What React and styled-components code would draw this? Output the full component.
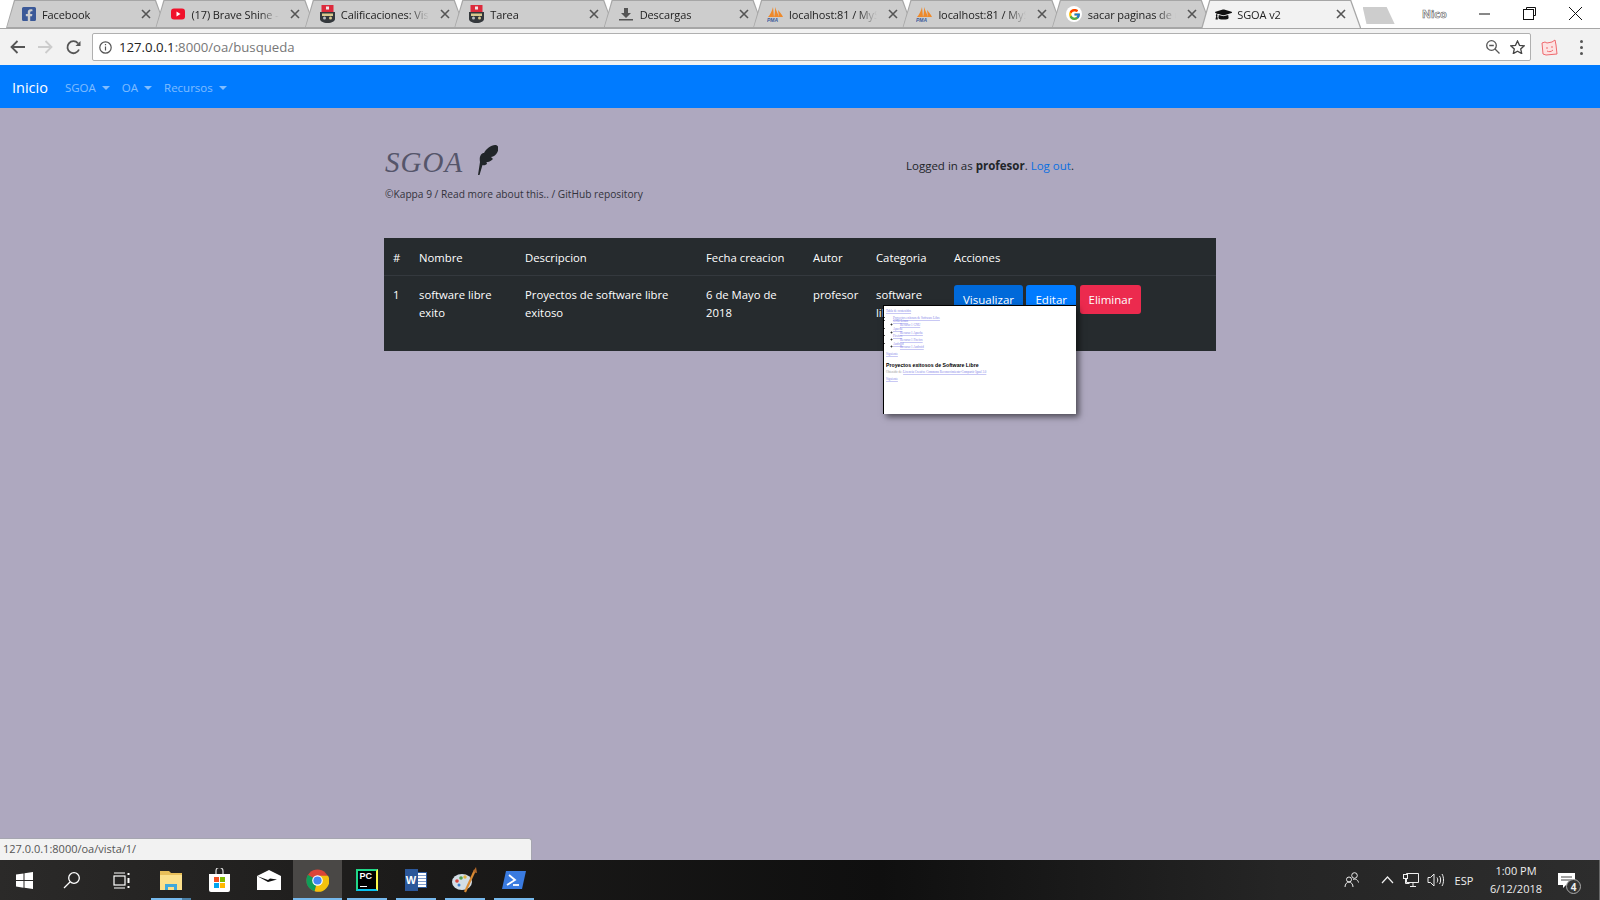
import React from 'react';
import styled, { createGlobalStyle } from 'styled-components';
import { FaFacebookSquare, FaGraduationCap } from 'react-icons/fa';
import { FcGoogle } from 'react-icons/fc';

const GlobalStyle = createGlobalStyle`
html, body {
  margin:0;
  padding:0;
  height:100%;
  overflow:hidden;
}
body {
  font-family:"Open Sans","Noto Sans",sans-serif;
}
`

const GoogleBadge = styled.div`
display:flex;
align-items:center;
justify-content:center;
width:16px;
height:16px;
border-radius:50%;
background-color:#fff;
`
const PyCharmIcon = styled.div`
position:relative;
width:22px;
height:22px;
box-sizing:border-box;
border:2px solid;
border-color:#21d789 #fcf84a #07c3f2 #21d789;
background-color:#000;
color:#fff;
font-family:"Liberation Sans",sans-serif;
font-size:9px;
line-height:11px;
padding-left:2px;

& i{
  position:absolute;
  left:2px;
  bottom:2px;
  width:7px;
  height:1px;
  background-color:#fff;
}
`
const WordIcon = styled.div`
position:relative;
width:22px;
height:22px;
color:#fff;
font-family:"Liberation Sans",sans-serif;
font-size:11px;
line-height:22px;

& span{
  position:absolute;
  right:0;
  top:3px;
  width:11px;
  height:16px;
  box-sizing:border-box;
  border:1px solid #2b579a;
  background:repeating-linear-gradient(to bottom, #fff 0 2px, #7f9ccb 2px 3px);
}
& b{
  position:absolute;
  left:0;
  top:0;
  width:13px;
  height:22px;
  text-align:center;
  background-color:#2b579a;
}
`

const EspolIcon = () => <svg width="15" height="18" viewBox="0 0 15 18">
  <rect x="1.500" y="0" width="12" height="7" fill="#dd2a3c" />
  <rect x="6" y="1.500" width="3" height="3" fill="#f2e6e6" />
  <path d="M0 7h15v7c0 2-3 4-7.500 4S0 16 0 14z" fill="#34383c" />
  <rect x="2" y="8.500" width="11" height="2.500" fill="#d9c98f" />
  <circle cx="4.500" cy="13" r="1.500" fill="#b9bdc2" />
  <circle cx="10.500" cy="13" r="1.500" fill="#d9c98f" />
</svg>

const YoutubeIcon = () => <svg width="14" height="12" viewBox="0 0 14 12">
  <rect width="14" height="11" y="0.500" rx="3" fill="#f0122b" />
  <path d="M5.500 3.500l4 2.500-4 2.500z" fill="#fff" />
</svg>

const DownloadIcon = () => <svg width="14" height="14" viewBox="0 0 14 14">
  <path d="M5 1h4v5h3L7 11 2 6h3z" fill="#555" />
  <rect y="12" width="14" height="1.500" fill="#555" />
</svg>

const PmaIcon = () => <svg width="17" height="16" viewBox="0 0 17 16">
  <path d="M1 11C3 9 5 5 6 1l1 10zM7 11c1-3 1-7 1-10 1 3 3 7 4 10zM11 4c2 2 4 5 5 7h-4z" fill="#ee8a2c" />
  <text x="0" y="16" fontSize="5" fontStyle="italic" fontWeight="700" fontFamily="Liberation Sans" fill="#3b5a9a">PMA</text>
</svg>

const FeatherLogo = () => <svg width="22" height="30" viewBox="0 0 22 30">
  <path d="M2 30L4 17C3 12 5 8 8 8 10 4 15 0 19 0 23 0 23 4 21.500 7 20 10 18 11.500 15 12L17 14C14.500 16.500 12.500 17 10.500 17L11 19C9 20.500 7.500 20.500 6.500 20L3.500 30z" fill="#212529" />
</svg>

const GoogleIcon = () => <GoogleBadge><FcGoogle size={13} /></GoogleBadge>

const tabs = [
  { title: 'Facebook', icon: <FaFacebookSquare size={16} color="#3b5998" /> },
  { title: '(17) Brave Shine - YouTube', icon: <YoutubeIcon /> },
  { title: 'Calificaciones: Vista', icon: <EspolIcon /> },
  { title: 'Tarea', icon: <EspolIcon /> },
  { title: 'Descargas', icon: <DownloadIcon /> },
  { title: 'localhost:81 / MySQL', icon: <PmaIcon /> },
  { title: 'localhost:81 / MySQL', icon: <PmaIcon /> },
  { title: 'sacar paginas de un pdf', icon: <GoogleIcon /> },
  { title: 'SGOA v2', icon: <FaGraduationCap size={17} color="#111" />, active: true },
];

const CloseX = () => <svg width="10" height="10" viewBox="0 0 10 10">
  <path d="M1 1l8 8M9 1L1 9" stroke="#555" strokeWidth="1.600" />
</svg>

const ChromeLogo = () => <svg width="23" height="23" viewBox="0 0 24 24">
  <circle cx="12" cy="12" r="11.500" fill="#db4437" />
  <path d="M12 12L2 6A11.500 11.500 0 0 0 9 23.100z" fill="#0f9d58" />
  <path d="M12 7h11A11.500 11.500 0 0 1 9 23.100l3-11z" fill="#f4c20d" />
  <circle cx="12" cy="12" r="5.500" fill="#fff" />
  <circle cx="12" cy="12" r="4.300" fill="#4285f4" />
</svg>

const taskItems = [
  { key: 'start', width: 48, icon: <svg width="17" height="17" viewBox="0 0 17 17"><path d="M0 2.500L7.500 1.400v6.700H0zM8.500 1.300L17 0v8.100H8.500zM0 9h7.500v6.700L0 14.600zM8.500 9H17v8l-8.500-1.200z" fill="#fff" /></svg> },
  { key: 'search', width: 48, icon: <svg width="18" height="18" viewBox="0 0 18 18" fill="none" stroke="#fff" strokeWidth="1.300"><circle cx="11" cy="7" r="5.300" /><path d="M7 11l-6 6" /></svg> },
  { key: 'view', width: 50, icon: <svg width="17" height="17" viewBox="0 0 17 17" fill="none" stroke="#fff" strokeWidth="1.200"><path d="M1 1h11M1 16h11" /><rect x="1" y="4" width="11" height="9" /><path d="M15.500 1v2M15.500 6v5M15.500 14v2" strokeWidth="2" /></svg> },
  { key: 'files', width: 49, running: 'split', icon: <svg width="22" height="19" viewBox="0 0 22 19"><path d="M0 0h9l2 2h11v17H0z" fill="#e8bf5a" /><rect y="4" width="22" height="15" fill="#fbe08c" /><path d="M5 19v-6h12v6h-3v-3H8v3z" fill="#3fa8dc" /></svg> },
  { key: 'store', width: 49, icon: <svg width="23" height="24" viewBox="0 0 23 24"><path d="M8 7V3a3.500 3.500 0 0 1 7 0v4" fill="none" stroke="#ddd" strokeWidth="1.200" /><path d="M1 6h21v16a2 2 0 0 1-2 2H3a2 2 0 0 1-2-2z" fill="#fff" /><rect x="6" y="9" width="5" height="5" fill="#f25022" /><rect x="12" y="9" width="5" height="5" fill="#7fba00" /><rect x="6" y="15" width="5" height="5" fill="#00a4ef" /><rect x="12" y="15" width="5" height="5" fill="#ffb900" /></svg> },
  { key: 'mail', width: 49, icon: <svg width="24" height="20" viewBox="0 0 24 20"><path d="M0 6L12 0l12 6v14H0z" fill="#fff" /><path d="M0 6l11 6 9-2.500-7-1-2 1.500z" fill="#111" /></svg> },
  { key: 'chrome', width: 49, running: 'active', icon: <ChromeLogo /> },
  { key: 'pycharm', width: 49, running: 'on', icon: <PyCharmIcon><b>PC</b><i /></PyCharmIcon> },
  { key: 'word', width: 49, running: 'on', icon: <WordIcon><span /><b>W</b></WordIcon> },
  { key: 'paint', width: 49, running: 'on', icon: <svg width="25" height="26" viewBox="0 0 25 26"><ellipse cx="10" cy="15" rx="10" ry="8" fill="#d3dde6" /><circle cx="5" cy="14" r="1.800" fill="#d8453b" /><circle cx="9" cy="11" r="1.800" fill="#4fa04a" /><circle cx="13" cy="10" r="1.700" fill="#e3b23c" /><circle cx="7" cy="18" r="1.500" fill="#3f7fcf" /><path d="M13 25L23 3" stroke="#d98a33" strokeWidth="2.200" /><path d="M21 5l3-5 1 6z" fill="#b56a2a" /></svg> },
  { key: 'shell', width: 49, running: 'on', icon: <svg width="24" height="18" viewBox="0 0 24 18"><path d="M4 0h20l-4 18H0z" fill="#3a7be0" /><path d="M7 4l6 5-8 5" fill="none" stroke="#fff" strokeWidth="1.800" /><path d="M11 14h6" stroke="#fff" strokeWidth="1.800" /></svg> },
];

const App = () => {
  return <Screen>
    <GlobalStyle />
    <TabStrip>
      <TabRow>
        {tabs.map((tab, index) => {
          return <Tab key={index} $active={tab.active}>
            <TabIcon>{tab.icon}</TabIcon>
            <TabTitle>{tab.title}</TabTitle>
            <TabClose><CloseX /></TabClose>
          </Tab>
        })}
        <NewTab />
      </TabRow>
      <ProfileName>Nico</ProfileName>
      <WindowControls>
        <svg width="13" height="13" viewBox="0 0 13 13"><path d="M1 7h11" stroke="#111" /></svg>
        <svg width="13" height="13" viewBox="0 0 13 13" fill="none" stroke="#111"><path d="M3.500 2.500v-2h9v8h-2" /><rect x="0.500" y="2.500" width="10" height="10" /></svg>
        <svg width="15" height="15" viewBox="0 0 15 15"><path d="M1 1l13 13M14 1L1 14" stroke="#111" /></svg>
      </WindowControls>
    </TabStrip>

    <Toolbar>
      <NavIcons>
        <svg width="15" height="14" viewBox="0 0 15 14" fill="none" stroke="#555" strokeWidth="1.800"><path d="M15 7H2M7.500 1L1.500 7l6 6" /></svg>
        <svg width="15" height="14" viewBox="0 0 15 14" fill="none" stroke="#ccc" strokeWidth="1.800"><path d="M0 7h13M7.500 1l6 6-6 6" /></svg>
        <svg width="15" height="15" viewBox="0 0 15 15" fill="none" stroke="#555" strokeWidth="1.800"><path d="M13 9.500A6 6 0 1 1 12 3.300" /><path d="M14.500 1v5h-5z" fill="#555" stroke="none" /></svg>
      </NavIcons>
      <AddressBar>
        <svg width="13" height="13" viewBox="0 0 13 13" fill="none" stroke="#555" strokeWidth="1.200"><circle cx="6.500" cy="6.500" r="5.700" /><path d="M6.500 5.500v4M6.500 3v1.300" /></svg>
        <UrlText>127.0.0.1<UrlRest>:8000/oa/busqueda</UrlRest></UrlText>
        <AddressActions>
          <svg width="14" height="14" viewBox="0 0 14 14" fill="none" stroke="#555" strokeWidth="1.300"><circle cx="5.500" cy="5.500" r="4.800" /><path d="M9 9l4.500 4.500M3.200 5.500h4.600" /></svg>
          <svg width="15" height="14" viewBox="0 0 15 14" fill="none" stroke="#444" strokeWidth="1.300"><path d="M7.500 1l2 4.300 4.700.5-3.500 3.200 1 4.600-4.200-2.400-4.200 2.400 1-4.600L.800 5.800l4.700-.5z" /></svg>
        </AddressActions>
      </AddressBar>
      <svg width="17" height="17" viewBox="0 0 17 17" fill="none" stroke="#ef6a6f" strokeWidth="1"><path d="M1 4l3-1 2 1 5-1 3-2 1 5 1 9-11 1-3-1z" fill="#fde3e3" /><path d="M5 9h2M10 8h2M6 12c2 1 4 1 6-1" /></svg>
      <MenuDots><i /><i /><i /></MenuDots>
    </Toolbar>

    <Navbar>
      <Brand>Inicio</Brand>
      <NavLink>SGOA</NavLink>
      <NavLink>OA</NavLink>
      <NavLink>Recursos</NavLink>
    </Navbar>

    <Page>
      <Masthead>
        <div>
          <LogoRow>
            <LogoText>SGOA</LogoText>
            <FeatherLogo />
          </LogoRow>
          <Credits>©Kappa 9 / Read more about this.. / GitHub repository</Credits>
        </div>
        <Session>Logged in as <b>profesor</b>. <a>Log out</a>.</Session>
      </Masthead>

      <TableWrap>
        <ResultTable>
          <thead>
            <tr>
              <HeadCell $width={26}>#</HeadCell>
              <HeadCell $width={106}>Nombre</HeadCell>
              <HeadCell $width={181}>Descripcion</HeadCell>
              <HeadCell $width={107}>Fecha creacion</HeadCell>
              <HeadCell $width={63}>Autor</HeadCell>
              <HeadCell $width={78}>Categoria</HeadCell>
              <HeadCell>Acciones</HeadCell>
            </tr>
          </thead>
          <tbody>
            <tr>
              <BodyCell>1</BodyCell>
              <BodyCell>software libre exito</BodyCell>
              <BodyCell>Proyectos de software libre exitoso</BodyCell>
              <BodyCell>6 de Mayo de 2018</BodyCell>
              <BodyCell>profesor</BodyCell>
              <BodyCell>software libre</BodyCell>
              <BodyCell>
                <Actions>
                  <ActionButton $bg="#0069d9">Visualizar</ActionButton>
                  <ActionButton $bg="#007bff">Editar</ActionButton>
                  <ActionButton $bg="#ec2a4e">Eliminar</ActionButton>
                </Actions>
              </BodyCell>
            </tr>
          </tbody>
        </ResultTable>
        <Preview>
          <MiniLink>Tabla de contenidos</MiniLink>
          <MiniList>
            <li><MiniLink>Proyectos exitosos de Software Libre</MiniLink></li>
            <li><MiniLink>GNU/Linux</MiniLink><ul><li><MiniLink>Recurso 1 GNU</MiniLink></li></ul></li>
            <li><MiniLink>Apache</MiniLink><ul><li><MiniLink>Recurso 1 Apache</MiniLink></li></ul></li>
            <li><MiniLink>Firefox</MiniLink><ul><li><MiniLink>Recurso 1 Firefox</MiniLink></li></ul></li>
            <li><MiniLink>Android</MiniLink><ul><li><MiniLink>Recurso 1 Android</MiniLink></li></ul></li>
          </MiniList>
          <MiniPara><MiniLink>Siguiente</MiniLink></MiniPara>
          <MiniTitle>Proyectos exitosos de Software Libre</MiniTitle>
          <MiniPara>Obtenido de: <MiniLink>Licencia Creative Commons Reconocimiento-Compartir Igual 3.0</MiniLink></MiniPara>
          <MiniPara $gap={4}><MiniLink>Siguiente</MiniLink></MiniPara>
        </Preview>
      </TableWrap>

      <StatusBubble>127.0.0.1:8000/oa/vista/1/</StatusBubble>
    </Page>

    <Taskbar>
      {taskItems.map((item) => {
        return <TaskCell key={item.key} $width={item.width} $running={item.running}>{item.icon}</TaskCell>
      })}
      <Tray>
        <TrayIcon $width={36} $after={5}>
          <svg width="16" height="16" viewBox="0 0 16 16" fill="none" stroke="#eee" strokeWidth="1"><circle cx="10.500" cy="3.500" r="2.800" /><circle cx="5" cy="7.500" r="2.500" /><path d="M1 15c0-3 2-5 4-5s4 2 4 5M9 7.500c2-1 5 0 5.500 3" /></svg>
        </TrayIcon>
        <TrayIcon $width={24}>
          <svg width="13" height="8" viewBox="0 0 13 8" fill="none" stroke="#eee" strokeWidth="1.200"><path d="M1 7l5.500-6L12 7" /></svg>
        </TrayIcon>
        <TrayIcon $width={24}>
          <svg width="16" height="14" viewBox="0 0 16 14" fill="none" stroke="#eee"><path d="M3.500 0.500h12v9h-12zM7 13.500h6M10 9.500v4" /><rect x="0.500" y="1.500" width="4" height="4" fill="#2c2c2c" /><path d="M2.500 5.500v5h4" /></svg>
        </TrayIcon>
        <TrayIcon $width={24}>
          <svg width="17" height="14" viewBox="0 0 17 14" fill="none" stroke="#eee"><path d="M1 4.500h2.500L7 1v12L3.500 9.500H1zM10 4.500c1 1.500 1 3.500 0 5M12.500 3c1.500 2 1.500 6 0 8M15 1c2 3 2 9 0 12" /></svg>
        </TrayIcon>
        <TrayText $width={34}>ESP</TrayText>
        <Clock>
          <span>1:00 PM</span>
          <span>6/12/2018</span>
        </Clock>
        <Notification>
          <svg width="17" height="15" viewBox="0 0 17 15"><path d="M0 0h17v12H8l-3 3v-3H0z" fill="#fff" /><path d="M3 4h11M3 7h11" stroke="#444" /></svg>
          <NotificationCount>4</NotificationCount>
        </Notification>
      </Tray>
    </Taskbar>
  </Screen>;
};

const Screen = styled.div`
position:relative;
display:flex;
flex-flow:column nowrap;
width:1600px;
height:900px;
background-color:#aea8bf;
overflow:hidden;
`

const TabStrip = styled.div`
display:flex;
flex-flow:row nowrap;
align-items:flex-start;
height:28px;
padding-left:6px;
background-color:#fff;
flex:none;
`
const TabRow = styled.div`
display:flex;
flex-flow:row nowrap;
width:1395px;
flex:none;
`
const TAB_SHAPE = 'polygon(0 100%, 8px 0, calc(100% - 10px) 0, 100% 100%)';
const Tab = styled.div`
position:relative;
z-index:${(p) => (p.$active ? 2 : 1)};
display:flex;
flex-flow:row nowrap;
align-items:center;
width:160px;
height:28px;
margin-right:-10.6px;
padding:0 14px;
box-sizing:border-box;
background-color:#a6a6a6;
clip-path:${TAB_SHAPE};
flex:none;

&::before{
  content:"";
  position:absolute;
  inset:1px 1px ${(p) => (p.$active ? '-1px' : '1px')} 1px;
  background-color:${(p) => (p.$active ? '#f2f2f2' : '#cdcdcd')};
  clip-path:${TAB_SHAPE};
}
`
const TabIcon = styled.div`
position:relative;
display:flex;
align-items:center;
justify-content:center;
width:17px;
height:18px;
flex:none;
margin-right:5px;
`
const TabTitle = styled.div`
position:relative;
flex:1;
overflow:hidden;
white-space:nowrap;
font-family:"Open Sans",sans-serif;
font-size:11px;
letter-spacing:-0.1px;
color:#222;
-webkit-mask-image:linear-gradient(to right, #000 78%, transparent 100%);
mask-image:linear-gradient(to right, #000 78%, transparent 100%);
`
const TabClose = styled.div`
position:relative;
display:flex;
flex:none;
margin-left:11px;
margin-right:1px;
`
const NewTab = styled.div`
flex:none;
width:32px;
height:17px;
margin:7px 0 0 12px;
background-color:#cdcdcd;
clip-path:polygon(0 0, 75% 0, 100% 100%, 12% 100%);
`
const ProfileName = styled.div`
margin:6px 0 0 0;
padding-left:21px;
width:37px;
flex:none;
font-family:"Open Sans",sans-serif;
font-size:11px;
font-weight:700;
color:#fff;
-webkit-text-stroke:0.6px #666;
`
const WindowControls = styled.div`
display:flex;
flex-flow:row nowrap;
align-items:center;
gap:32px;
margin-top:6px;
margin-left:19px;
flex:none;
`

const Toolbar = styled.div`
display:flex;
flex-flow:row nowrap;
align-items:center;
height:37px;
flex:none;
box-sizing:border-box;
border-top:1px solid #a6a6a6;
background-color:#f2f2f2;
padding-right:11px;
`
const NavIcons = styled.div`
display:flex;
flex-flow:row nowrap;
align-items:center;
gap:13px;
width:92px;
padding-left:10px;
box-sizing:border-box;
flex:none;
`
const AddressBar = styled.div`
display:flex;
flex-flow:row nowrap;
align-items:center;
gap:7px;
width:1439px;
height:28px;
box-sizing:border-box;
padding:0 5px 0 6px;
background-color:#fff;
border:1px solid #b0b0b0;
border-radius:2px;
flex:none;
margin-right:10px;
`
const UrlText = styled.div`
flex:1;
font-family:"Open Sans",sans-serif;
font-size:13.2px;
color:#222;
`
const UrlRest = styled.span`
color:#777;
`
const AddressActions = styled.div`
display:flex;
flex-flow:row nowrap;
align-items:center;
gap:10px;
`
const MenuDots = styled.div`
display:flex;
flex-flow:column nowrap;
gap:3px;
margin-left:22px;

& i{
  display:block;
  width:3px;
  height:3px;
  border-radius:50%;
  background-color:#555;
}
`

const Navbar = styled.div`
display:flex;
flex-flow:row nowrap;
align-items:center;
height:43px;
flex:none;
padding:2px 0 0 12px;
box-sizing:border-box;
background-color:#007bff;
`
const Brand = styled.div`
font-family:"Open Sans",sans-serif;
font-size:14.5px;
color:#fff;
margin-right:17px;
`
const NavLink = styled.div`
display:flex;
flex-flow:row nowrap;
align-items:center;
font-family:"Open Sans",sans-serif;
font-size:11.5px;
color:rgba(255,255,255,0.5);
margin-right:12px;

&::after{
  content:"";
  margin-left:6px;
  border-top:4px solid rgba(255,255,255,0.5);
  border-left:4px solid transparent;
  border-right:4px solid transparent;
}
`

const Page = styled.div`
position:relative;
flex:1;
padding:0 384px;
`
const Masthead = styled.div`
display:flex;
flex-flow:row nowrap;
align-items:flex-start;
height:130px;
padding-left:1px;
padding-top:34px;
box-sizing:border-box;
`
const LogoRow = styled.div`
display:flex;
flex-flow:row nowrap;
align-items:center;
gap:13px;
height:36px;
margin-bottom:9px;
`
const LogoText = styled.div`
font-family:"Liberation Serif",serif;
font-style:italic;
font-size:29px;
line-height:36px;
color:#55556a;
letter-spacing:1px;
margin-top:4px;
`
const Credits = styled.div`
font-family:"Open Sans",sans-serif;
font-size:10.2px;
color:#33333c;
width:260px;
white-space:nowrap;
`
const Session = styled.div`
margin-left:261px;
margin-top:16px;
font-family:"Open Sans",sans-serif;
font-size:11.5px;
color:#212529;
white-space:nowrap;

& a{
  color:#0a6fe0;
}
`

const TableWrap = styled.div`
position:relative;
width:832px;
`
const ResultTable = styled.table`
width:832px;
table-layout:fixed;
border-collapse:collapse;
background-color:#262b2e;
font-family:"Open Sans",sans-serif;
font-size:11.3px;
line-height:18px;
color:#fff;
`
const HeadCell = styled.th`
width:${(p) => (p.$width ? `${p.$width}px` : 'auto')};
height:37px;
padding:3px 9px 0;
box-sizing:border-box;
text-align:left;
font-weight:400;
border-bottom:1px solid #34393e;
`
const BodyCell = styled.td`
height:76px;
padding:10px 9px 0;
box-sizing:border-box;
vertical-align:top;
`
const Actions = styled.div`
display:flex;
flex-flow:row nowrap;
gap:3.5px;
margin-top:-1px;
`
const ActionButton = styled.div`
padding:0 9px;
height:29px;
line-height:29px;
border-radius:3px;
color:#fff;
font-size:11.5px;
white-space:nowrap;
background-color:${(p) => p.$bg};
`

const Preview = styled.div`
position:absolute;
left:499px;
top:67px;
width:193px;
height:109px;
box-sizing:border-box;
padding:4px 2px;
background-color:#fff;
border-top:1px solid #000;
border-left:1px solid #000;
box-shadow:3px 3px 6px rgba(0,0,0,0.55);
font-family:"Liberation Serif",serif;
font-size:3.15px;
line-height:3.7px;
color:#999;
overflow:hidden;
`
const MiniLink = styled.span`
color:#7f7fe8;
text-decoration:underline;
text-decoration-color:#c8c8f4;
`
const MiniList = styled.ul`
margin:3px 0 0 0;
padding-left:7px;
color:#555;
list-style:square;

& ul{
  margin:0;
  padding-left:7px;
  color:#000;
}
`
const MiniPara = styled.div`
margin-top:${(p) => (p.$gap ? p.$gap : 3)}px;
`
const MiniTitle = styled.div`
margin-top:5px;
font-family:"Liberation Sans",sans-serif;
font-size:5.2px;
line-height:6px;
font-weight:700;
color:#000;
`

const StatusBubble = styled.div`
position:absolute;
left:0;
bottom:0;
width:528px;
height:21px;
padding-left:3px;
box-sizing:content-box;
background-color:#f2f2f2;
border-top:1px solid #a6a6b0;
border-right:1px solid #a6a6b0;
border-top-right-radius:3px;
font-family:"Open Sans",sans-serif;
font-size:11px;
line-height:20px;
color:#555;
`

const Taskbar = styled.div`
display:flex;
flex-flow:row nowrap;
height:40px;
flex:none;
background:linear-gradient(to right, #2b2a29 0%, #1c1b1a 25%, #0f0f0f 55%, #252525 80%, #2d2d2d 100%);
`
const TaskCell = styled.div`
position:relative;
display:flex;
align-items:center;
justify-content:center;
width:${(p) => p.$width}px;
height:40px;
flex:none;
background-color:${(p) => (p.$running === 'active' ? '#4a4846' : 'transparent')};

&::after{
  content:"";
  display:${(p) => (p.$running ? 'block' : 'none')};
  position:absolute;
  bottom:0;
  left:${(p) => (p.$running === 'active' ? '0' : '4.5px')};
  right:${(p) => (p.$running === 'active' ? '0' : '4.5px')};
  height:2px;
  background:${(p) => (p.$running === 'split'
    ? 'linear-gradient(to right, #76b9ed 78%, #4a7fa6 78%)'
    : '#76b9ed')};
}
`
const Tray = styled.div`
display:flex;
flex-flow:row nowrap;
align-items:center;
margin-left:auto;
padding-right:16px;
border-right:1px solid #666;
color:#eee;
font-family:"Open Sans",sans-serif;
font-size:11px;
`
const TrayIcon = styled.div`
display:flex;
align-items:center;
justify-content:center;
width:${(p) => p.$width}px;
margin-right:${(p) => (p.$after ? p.$after : 0)}px;
`
const TrayText = styled.div`
text-align:center;
width:${(p) => p.$width}px;
`
const Clock = styled.div`
display:flex;
flex-flow:column nowrap;
align-items:center;
gap:2px;
width:66px;
margin-left:2px;
line-height:16px;
`
const Notification = styled.div`
position:relative;
display:flex;
align-items:center;
justify-content:center;
width:34px;
height:40px;
`
const NotificationCount = styled.div`
position:absolute;
right:2px;
bottom:6px;
width:15px;
height:15px;
line-height:14px;
box-sizing:border-box;
border:1px solid #aaa;
border-radius:50%;
background-color:#333;
text-align:center;
font-size:10px;
font-weight:700;
`

export default App;
